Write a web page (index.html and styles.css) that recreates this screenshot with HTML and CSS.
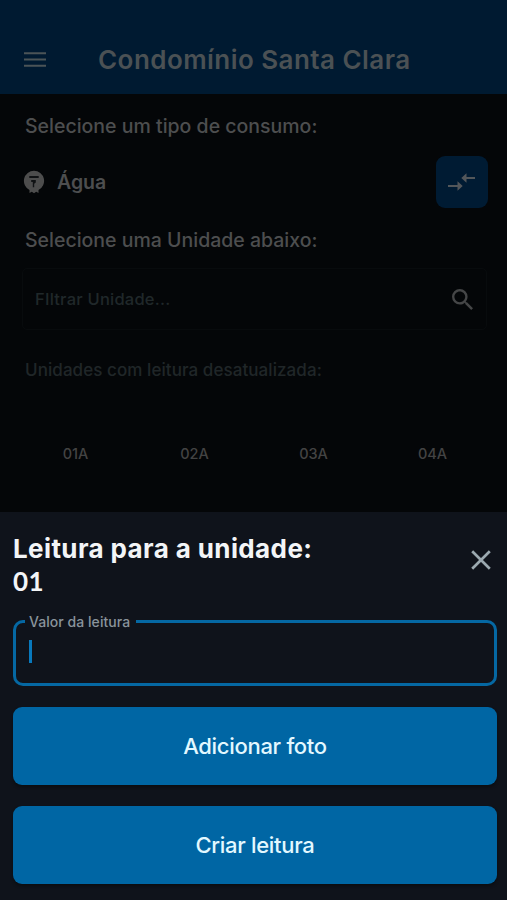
FILE: index.html
```html
<!DOCTYPE html>
<html lang="pt-BR">
<head>
<meta charset="utf-8">
<title>Condomínio Santa Clara</title>
<link rel="stylesheet" href="styles.css">
</head>
<body>
<div class="screen">
  <header class="topbar">
    <svg class="menu" viewBox="0 0 22 15" aria-hidden="true"><path d="M0 1.25h22M0 7.5h22M0 13.75h22"/></svg>
    <h1><span>Condomínio Santa Clara</span></h1>
  </header>
  <main class="content">
    <p class="prompt prompt-type"><span>Selecione um tipo de consumo:</span></p>
    <div class="consumption">
      <svg class="meter" viewBox="0 0 22 24" aria-hidden="true">
        <path class="meter-body" d="M11 .7A10.2 10.2 0 0 0 6.5 20v3l2.3-1.3L11 23.2l2.2-1.5 2.3 1.3v-3A10.2 10.2 0 0 0 11 .7Z"/>
        <path class="meter-mark" d="M6.3 6h9.4v2H6.3ZM8.2 10h4.6v2.4l-1.6 1.4v3.4H9.8V12H8.2Z"/>
      </svg>
      <span class="consumption-name"><span>Água</span></span>
      <button class="swap" aria-label="Trocar">
        <svg viewBox="0 0 28 20" aria-hidden="true"><path class="line" d="M0 14h11M17 6h10"/><path class="head" d="M9.5 9.2l5.2 4.8-5.2 4.8ZM18.5 1.2L13.3 6l5.2 4.8Z"/></svg>
      </button>
    </div>
    <p class="prompt prompt-unit"><span>Selecione uma Unidade abaixo:</span></p>
    <div class="filter">
      <span class="placeholder">FIltrar Unidade...</span>
      <svg viewBox="3 3 17.49 17.49" aria-hidden="true"><path d="M15.5 14h-.79l-.28-.27A6.471 6.471 0 0 0 16 9.5 6.5 6.5 0 1 0 9.5 16c1.61 0 3.09-.59 4.23-1.57l.27.28v.79l5 4.99L20.49 19l-4.99-5zm-6 0C7.01 14 5 11.99 5 9.5S7.01 5 9.5 5 14 7.01 14 9.5 11.99 14 9.5 14z"/></svg>
    </div>
    <p class="outdated"><span>Unidades com leitura desatualizada:</span></p>
    <div class="units"><span>01A</span><span>02A</span><span>03A</span><span>04A</span></div>
  </main>
  <section class="sheet">
    <div class="sheet-head">
      <h2><span>Leitura para a unidade:</span><br><span class="unit-number">01</span></h2>
      <svg class="close" viewBox="0 0 20 20" aria-hidden="true"><path d="M1.2 1.2l17.6 17.6M18.8 1.2L1.2 18.8"/></svg>
    </div>
    <fieldset class="field">
      <legend><span>Valor da leitura</span></legend>
      <div class="caret"></div>
    </fieldset>
    <button class="action"><span>Adicionar foto</span></button>
    <button class="action"><span>Criar leitura</span></button>
  </section>
</div>
</body>
</html>
```
FILE: styles.css
```css
* { box-sizing: border-box; }
body { margin: 0; background: #0f131b; font-family: Inter, sans-serif; }
h1, h2, p { margin: 0; font-weight: 500; white-space: nowrap; }
svg { display: block; flex: none; }
button { border: 0; padding: 0; font: inherit; }
.screen { width: 507px; height: 900px; overflow: hidden; display: flex; flex-direction: column; background: #040608; }

.topbar { height: 94px; flex: none; background: #001a31; display: flex; align-items: flex-start; padding: 44px 24px 0; }
.menu { width: 22px; height: 15px; margin: 8px 52px 0 0; fill: none; stroke: #4b5457; stroke-width: 2.2; }
.topbar h1 { font: 600 26px/32px Inter, sans-serif; letter-spacing: .45px; color: #4b5154; }

.content { height: 418px; flex: none; padding: 20px 20px 0 22px; color: #4d4e4f; }
.prompt { font-size: 19.5px; line-height: 24px; padding-left: 3px; }
.consumption { display: flex; align-items: center; height: 52px; margin-top: 18px; }
.meter { width: 22px; height: 24px; margin-left: 1px; }
.meter-body { fill: #4d4d4d; }
.meter-mark { fill: #101214; }
.consumption-name { margin-left: 12px; font: 600 19.5px/24px Inter, sans-serif; flex: 1; }
.swap { width: 52px; height: 52px; border-radius: 9px; background: #001b33; display: grid; place-items: center; margin-right: -1px; }
.swap svg { width: 28px; height: 20px; }
.line { stroke: #53575a; stroke-width: 2; }
.head { fill: #53575a; }
.prompt-unit { margin-top: 20px; }
.filter { height: 62px; margin-top: 16px; display: flex; align-items: center; justify-content: space-between; padding: 0 13px 0 12px; border: 1px solid #080b0d; border-radius: 5px; }
.placeholder { font-size: 16.5px; font-weight: 500; line-height: 22px; letter-spacing: .22px; color: #20282a; }
.filter svg { width: 21px; height: 21px; fill: #454647; }
.outdated { margin-top: 29px; padding-left: 3px; font-size: 17px; line-height: 22px; letter-spacing: .07px; color: #202628; }
.units { display: grid; grid-template-columns: repeat(4, 119px); margin: 13px 0 0 -6px; height: 118px; align-items: center; text-align: center; font-size: 14.5px; font-weight: 500; color: #434343; }

.sheet { height: 388px; flex: none; background: #0f131b; padding: 20px 10px 0 13px; }
.sheet-head { display: flex; justify-content: space-between; height: 80px; }
.sheet-head h2 { font: 700 26px/33px Inter, sans-serif; color: #f3f5f7; letter-spacing: .39px; }
.sheet-head .unit-number { font-family: Lato, sans-serif; }
.close { width: 20px; height: 20px; margin: 18px 6px 0 0; fill: none; stroke: #9ba9b0; stroke-width: 2.7; }
.field { width: 484px; height: 74px; margin: 0; padding: 0 0 0 9px; border: 3px solid #0568a3; border-radius: 10px; min-width: 0; }
.field legend { height: 19px; padding: 0 6px 0 4px; font-size: 14px; font-weight: 500; line-height: 19px; letter-spacing: .05px; color: #89939b; }
.caret { width: 3px; height: 23px; margin: 9px 0 0 4px; background: #0879bd; }
.action { display: block; width: 484px; height: 78px; margin-top: 21px; border-radius: 9px; background: #0066a4; color: #e3f8ff; font-weight: 500; font-size: 22px; line-height: 26px; letter-spacing: -.3px; text-align: center; box-shadow: 0 2px 3px #0b0d11; }
```
